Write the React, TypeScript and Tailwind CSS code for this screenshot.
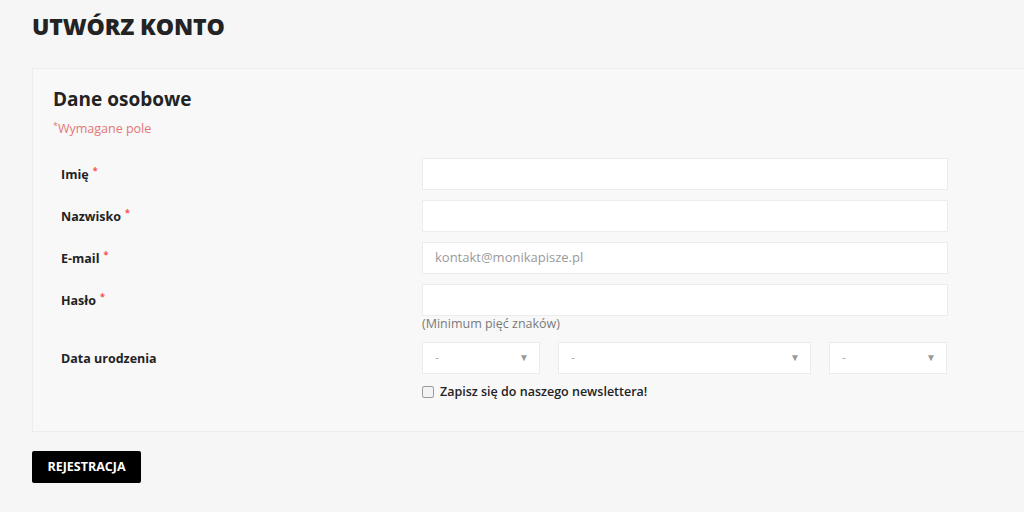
import React from 'react'

const font = { fontFamily: '"Open Sans", "Noto Sans", sans-serif' }

function Label({ text, required = true }: { text: string; required?: boolean }) {
  return (
    <div className="w-[369px] shrink-0 pl-2 pt-2 text-[12.5px] font-bold text-[#232323]">
      {text}
      {required && <sup className="ml-1 text-[9px] text-[#ff4c4c]">*</sup>}
    </div>
  )
}

function Field({ value }: { value?: string }) {
  return (
    <div className="flex h-8 w-[526px] items-center border border-[#ececec] bg-white px-3 text-[13px] text-[#9a9a9a]">
      {value}
    </div>
  )
}

function Select({ w }: { w: string }) {
  return (
    <div className={`flex h-8 ${w} items-center justify-between border border-[#ececec] bg-white pl-3 pr-2.5 text-[13px] text-[#b5b5b5]`}>
      <span>-</span>
      <span className="text-[10px] text-[#999]">▼</span>
    </div>
  )
}

export default function App() {
  return (
    <div className="min-h-[512px] w-[1024px] overflow-hidden bg-[#f6f6f6]" style={font}>
      <div className="pl-8 pt-[10px]">
        <h1 className="text-[23px] font-extrabold leading-8 tracking-[-0.1px] text-[#232323]">UTWÓRZ KONTO</h1>

        {/* Card */}
        <div className="mt-[26px] h-[364px] w-[1100px] border border-[#ececec] bg-[#f8f8f8] pl-5 pt-[16px]">
          <h2 className="text-[19px] font-bold leading-7 text-[#232323]">Dane osobowe</h2>
          <p className="mt-[7px] text-[12.5px] text-[#e57777]">
            <sup className="text-[9px]">*</sup>Wymagane pole
          </p>

          <div className="mt-[19px] flex flex-col gap-[10px]">
            <div className="flex">
              <Label text="Imię" />
              <Field />
            </div>
            <div className="flex">
              <Label text="Nazwisko" />
              <Field />
            </div>
            <div className="flex">
              <Label text="E-mail" />
              <Field value="kontakt@monikapisze.pl" />
            </div>
            <div className="flex">
              <Label text="Hasło" />
              <div className="flex flex-col">
                <Field />
                <span className="mt-[-1px] text-[12.5px] text-[#7a7a7a]">(Minimum pięć znaków)</span>
              </div>
            </div>
            <div className="mt-[-2px] flex">
              <Label text="Data urodzenia" required={false} />
              <div className="flex flex-col">
                <div className="flex gap-[18px]">
                  <Select w="w-[118px]" />
                  <Select w="w-[253px]" />
                  <Select w="w-[118px]" />
                </div>
                <label className="mt-[9px] flex items-center gap-[6px] text-[12.5px] font-semibold text-[#232323]">
                  <span className="h-[12px] w-[12px] rounded-[2px] border border-[#9a9a9a] bg-[#f3f3f3]" />
                  Zapisz się do naszego newslettera!
                </label>
              </div>
            </div>
          </div>
        </div>

        <button className="mt-[19px] flex h-8 w-[109px] items-center justify-center rounded-[2px] bg-black text-[12.5px] font-bold text-white">
          REJESTRACJA
        </button>
      </div>
    </div>
  )
}
